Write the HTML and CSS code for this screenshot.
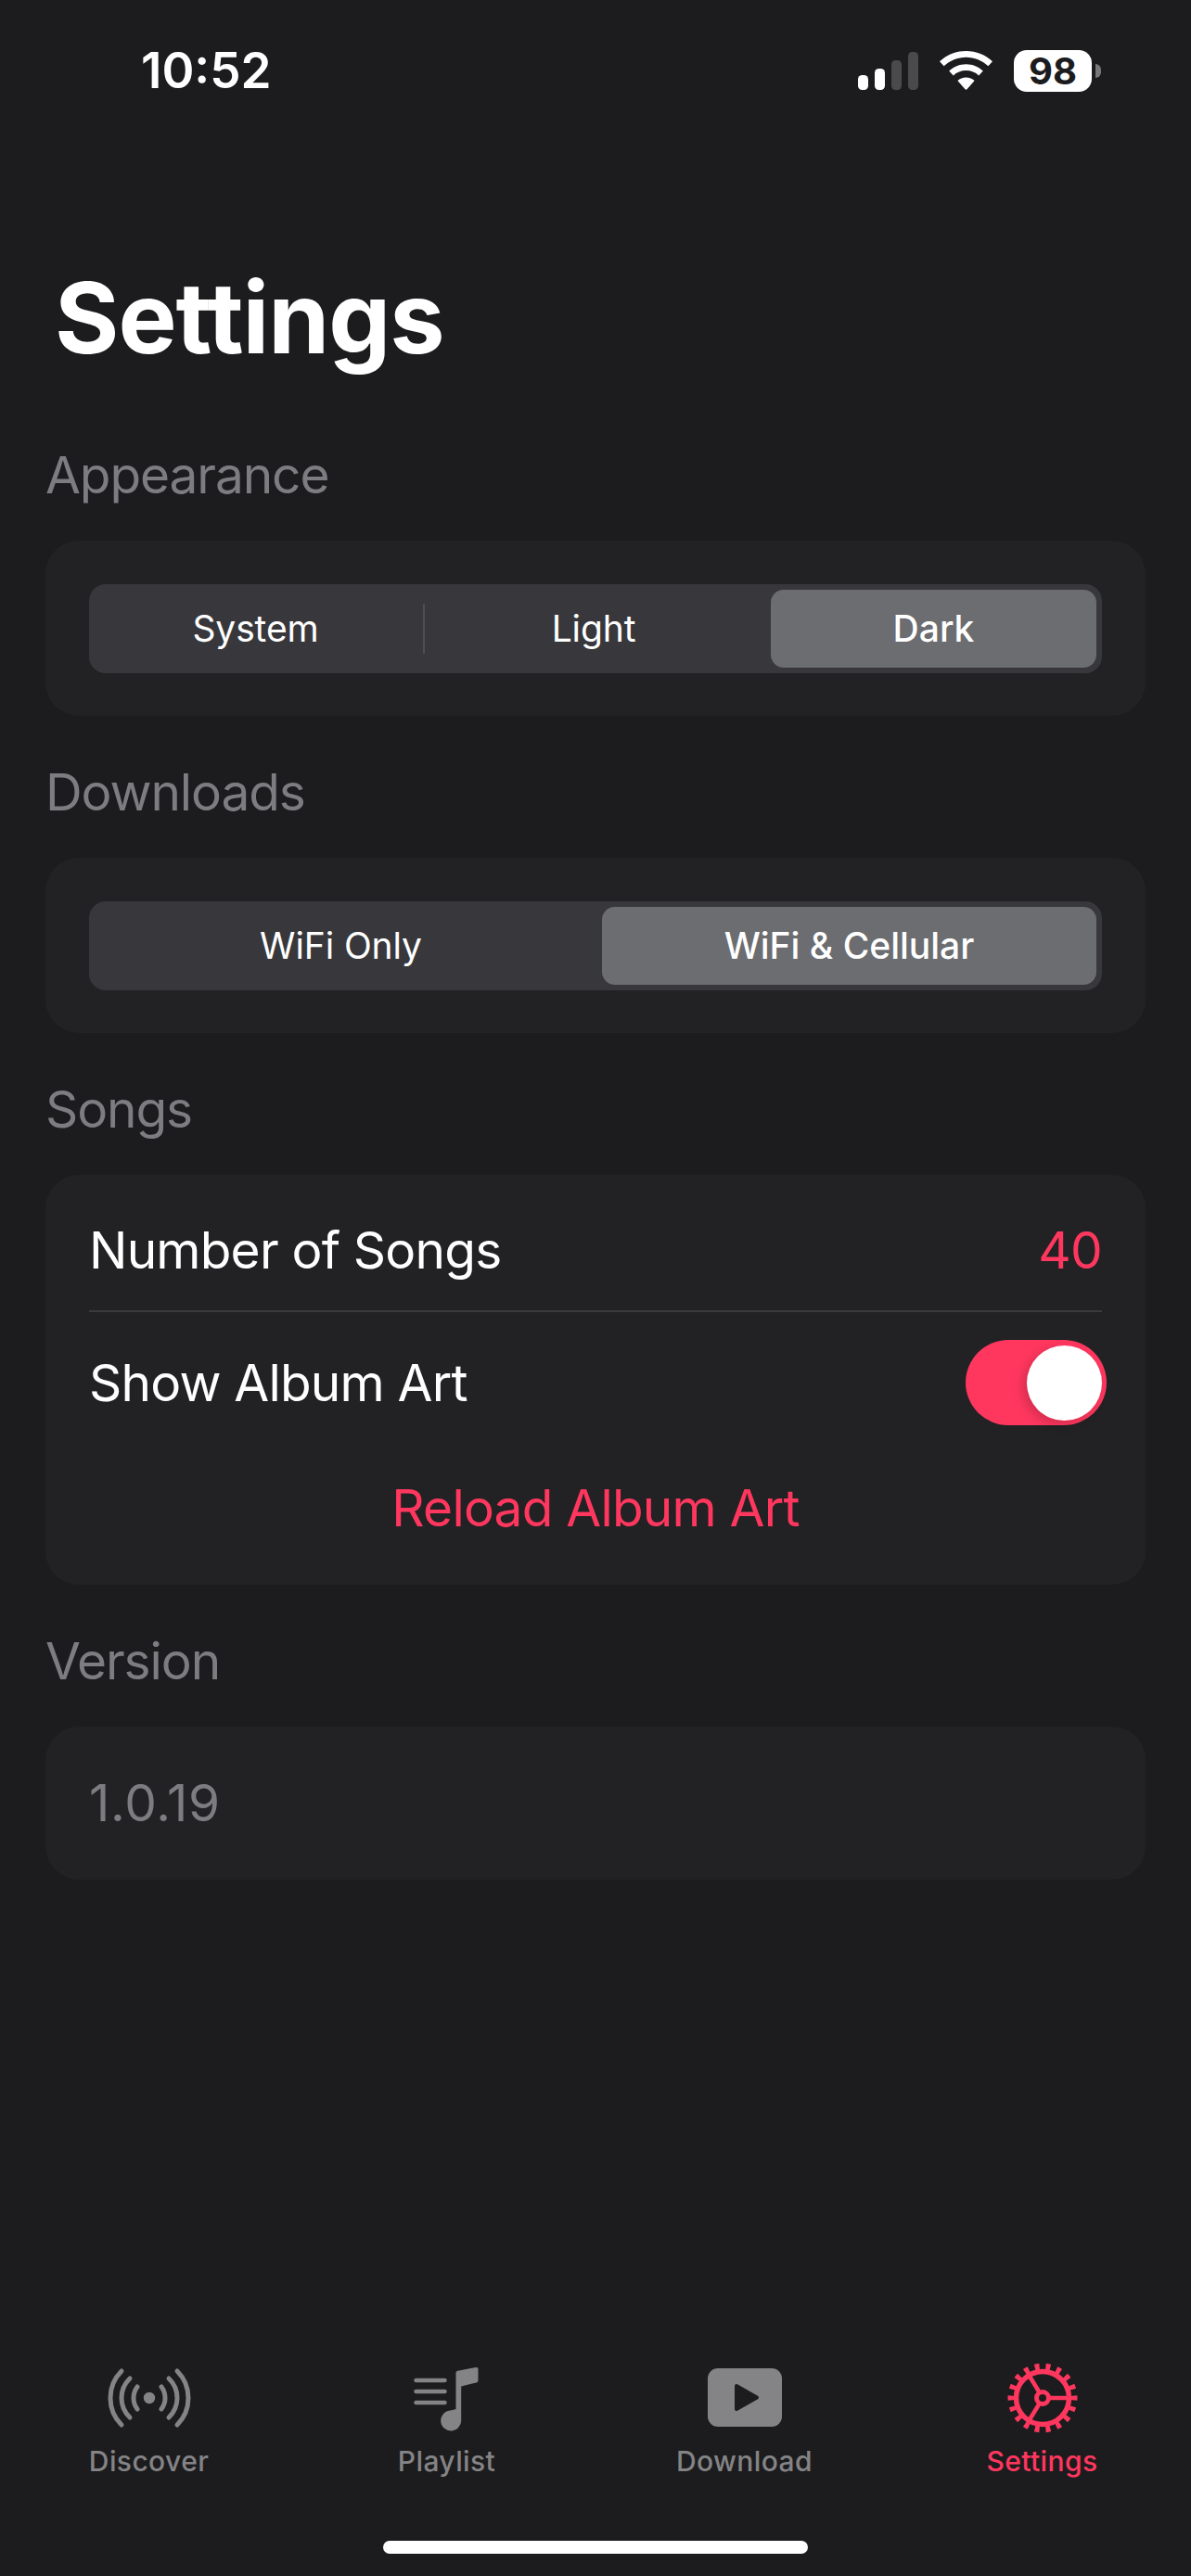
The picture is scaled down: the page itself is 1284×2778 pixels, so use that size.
FILE: index.html
```html
<!DOCTYPE html>
<html lang="en">
<head>
<meta charset="utf-8">
<title>Settings</title>
<link rel="stylesheet" href="styles.css">
</head>
<body>
<div class="screen">
  <header class="status">
    <span class="time">10:52</span>
    <div class="status-icons">
      <svg class="signal" width="65" height="41" viewBox="0 0 65 41" aria-hidden="true">
        <rect x="0" y="25" width="11" height="16" rx="4.5" fill="#fff"/>
        <rect x="18" y="18" width="11" height="23" rx="4.5" fill="#fff"/>
        <rect x="36" y="9" width="11" height="32" rx="4.5" fill="#4a4a4c"/>
        <rect x="54" y="0" width="11" height="41" rx="4.5" fill="#4a4a4c"/>
      </svg>
      <svg class="wifi" width="57" height="42" viewBox="0 0 57 42" aria-hidden="true">
        <path fill="#fff" d="M28.5 0C39.5 0 49.5 4.2 57 11.3L52.4 16.3C46 10.4 37.6 6.8 28.5 6.8S11 10.4 4.6 16.3L0 11.3C7.5 4.2 17.5 0 28.5 0Z"/>
        <path fill="#fff" d="M28.5 14.2C35.6 14.2 42 17 46.8 21.5L42.2 26.4C38.6 23 33.8 21 28.5 21S18.4 23 14.8 26.4L10.200 21.5C15 17 21.400 14.200 28.500 14.200Z"/>
        <path fill="#fff" d="M28.500 28.500C32 28.500 35.200 29.800 37.600 32L29.500 41.300C29 41.900 28 41.900 27.500 41.300L19.400 32C21.800 29.800 25 28.500 28.500 28.500Z"/>
      </svg>
      <div class="battery">
        <span class="battery-body">98</span>
        <span class="battery-cap"></span>
      </div>
    </div>
  </header>

  <main class="content">
    <h1 class="title">Settings</h1>

    <section class="section">
      <h2 class="label">Appearance</h2>
      <div class="card card-seg">
        <div class="seg seg-three">
          <span class="seg-item seg-pad">System</span>
          <span class="seg-item seg-pad seg-line">Light</span>
          <span class="seg-item seg-on">Dark</span>
        </div>
      </div>
    </section>

    <section class="section">
      <h2 class="label">Downloads</h2>
      <div class="card card-seg">
        <div class="seg seg-two">
          <span class="seg-item seg-pad-wide">WiFi Only</span>
          <span class="seg-item seg-on">WiFi &amp; Cellular</span>
        </div>
      </div>
    </section>

    <section class="section">
      <h2 class="label">Songs</h2>
      <div class="card card-songs">
        <div class="row row-number">
          <span>Number of Songs</span>
          <span class="accent">40</span>
        </div>
        <div class="row row-toggle">
          <span>Show Album Art</span>
          <div class="toggle"><span class="knob"></span></div>
        </div>
        <div class="reload accent">Reload Album Art</div>
      </div>
    </section>

    <section class="section">
      <h2 class="label">Version</h2>
      <div class="card card-version">1.0.19</div>
    </section>
  </main>

  <nav class="tabbar">
    <div class="tab">
      <svg class="tab-icon" width="96" height="76" viewBox="-48 -38 96 76" aria-hidden="true">
        <circle cx="0" cy="0" r="6.200" fill="#848486"/>
        <g fill="none" stroke="#848486" stroke-width="5" stroke-linecap="round">
          <path d="M-13 -12A20 20 0 0 0 -13 12"/>
          <path d="M13 -12A20 20 0 0 1 13 12"/>
          <path d="M-21 -21A29 29 0 0 0 -21 21"/>
          <path d="M21 -21A29 29 0 0 1 21 21"/>
          <path d="M-30 -29A41 41 0 0 0 -30 29"/>
          <path d="M30 -29A41 41 0 0 1 30 29"/>
        </g>
      </svg>
      <span class="tab-label">Discover</span>
    </div>
    <div class="tab">
      <svg class="tab-icon" width="72" height="76" viewBox="0 0 72 76" aria-hidden="true">
        <g stroke="#848486" stroke-width="4.500" stroke-linecap="round">
          <path d="M2.500 19H33.500"/>
          <path d="M2.500 31H33.500"/>
          <path d="M2.500 43H33.500"/>
        </g>
        <path fill="#848486" d="M45.500 11Q45.500 9.200 47.500 8.800L67 5Q69.500 4.500 69.500 7V19Q69.500 21 67.500 21.500L51.200 25.500V62A11 11 0 1 1 39 51.500Q42 51 45.500 50Z"/>
      </svg>
      <span class="tab-label">Playlist</span>
    </div>
    <div class="tab">
      <svg class="tab-icon" width="80" height="76" viewBox="0 0 80 76" aria-hidden="true">
        <rect x="0" y="6" width="80" height="63" rx="11" fill="#848486"/>
        <path d="M31 25L53 37.500L31 50Z" fill="#1c1c1e" stroke="#1c1c1e" stroke-width="4" stroke-linejoin="round"/>
      </svg>
      <span class="tab-label">Download</span>
    </div>
    <div class="tab tab-on">
      <svg class="tab-icon" width="76" height="76" viewBox="-38 -38 76 76" aria-hidden="true">
        <circle r="33.500" fill="none" stroke="#ff375f" stroke-width="8" pathLength="18" stroke-dasharray="0.420 0.580" stroke-dashoffset="0.210"/>
        <circle r="28.500" fill="none" stroke="#ff375f" stroke-width="5.500"/>
        <circle r="6.500" fill="none" stroke="#ff375f" stroke-width="5"/>
        <g stroke="#ff375f" stroke-width="4.500">
          <path d="M8 0H29"/>
          <path d="M-4 -7L-15 -25"/>
          <path d="M-4 7L-15 25"/>
        </g>
      </svg>
      <span class="tab-label">Settings</span>
    </div>
  </nav>

  <div class="home"><span class="home-bar"></span></div>
</div>
</body>
</html>
```

FILE: styles.css
```css
* { box-sizing: border-box; }

html, body {
  margin: 0;
  padding: 0;
  background: #1c1c1e;
}

.screen {
  width: 1284px;
  height: 2778px;
  display: flex;
  flex-direction: column;
  overflow: hidden;
  background: #1c1c1e;
  color: #fff;
  font-family: Inter, "Liberation Sans", sans-serif;
}

/* Status bar */
.status {
  height: 150px;
  padding: 46px 97px 0 152px;
  display: flex;
  justify-content: space-between;
  align-items: flex-start;
}

.time {
  font-size: 53px;
  font-weight: 600;
  line-height: 60px;
}

.status-icons {
  height: 60px;
  display: flex;
  align-items: center;
  gap: 23px;
}

.battery {
  display: flex;
  align-items: center;
  gap: 4px;
}

.battery-body {
  width: 84px;
  height: 45px;
  border-radius: 14px;
  background: #fff;
  color: #1c1c1e;
  font-size: 40px;
  font-weight: 700;
  line-height: 45px;
  text-align: center;
}

.battery-cap {
  width: 6px;
  height: 15px;
  border-radius: 0 8px 8px 0;
  background: #77777a;
}

/* Content */
.content {
  flex: 1;
  padding: 133px 49px 0;
}

.title {
  margin: 0 0 77px 10px;
  font-size: 106px;
  font-weight: 700;
  line-height: 120px;
  letter-spacing: -1px;
}

.section { margin-top: 50px; }

.label {
  margin: 0 0 38px;
  font-size: 55px;
  font-weight: 400;
  line-height: 65px;
  letter-spacing: -1.1px;
  color: #7d7d81;
}

.card {
  background: #222224;
  border-radius: 36px;
  padding-left: 47px;
  padding-right: 47px;
}

.card-seg { padding-top: 47px; padding-bottom: 46px; }

/* Segmented control */
.seg {
  height: 96px;
  padding: 6px;
  display: grid;
  background: #38383c;
  border-radius: 18px;
}

.seg-three { grid-template-columns: 355px 374px 351px; }
.seg-two { grid-template-columns: 547px 533px; }

.seg-item {
  position: relative;
  padding-bottom: 1px;
  display: flex;
  align-items: center;
  justify-content: center;
  font-size: 39px;
  font-weight: 400;
  letter-spacing: -0.1px;
}

.seg-pad { padding-right: 8px; }
.seg-pad-wide { padding-right: 16px; }

.seg-line::before {
  content: "";
  position: absolute;
  left: -1px;
  top: 15px;
  bottom: 15px;
  width: 2px;
  background: #4e4e52;
}

.seg-on {
  background: #6c6d71;
  border-radius: 14px;
  font-weight: 500;
  letter-spacing: 0;
}

/* Songs card */
.card-songs {
  padding-top: 48px;
  padding-bottom: 50px;
  font-size: 55px;
  line-height: 66px;
  letter-spacing: -0.8px;
}

.row {
  display: flex;
  justify-content: space-between;
  align-items: center;
}

.row-number {
  padding-bottom: 32px;
  border-bottom: 2px solid #3a3a3c;
}

.row-toggle {
  padding-top: 30px;
  margin-right: -5px;
}

.toggle {
  width: 152px;
  height: 92px;
  padding: 6px 5px;
  display: flex;
  justify-content: flex-end;
  background: #ff375f;
  border-radius: 46px;
}

.knob {
  width: 81px;
  height: 81px;
  border-radius: 50%;
  background: #fff;
  box-shadow: -4px 4px 12px rgba(0, 0, 0, 0.18);
}

.reload {
  margin-top: 56px;
  text-align: center;
}

.accent { color: #ff375f; }

.card-version {
  padding-top: 50px;
  padding-bottom: 50px;
  font-size: 55px;
  line-height: 65px;
  letter-spacing: 0.7px;
  color: #7d7d81;
}

/* Tab bar */
.tabbar {
  display: grid;
  grid-template-columns: repeat(4, 1fr);
}

.tab {
  display: flex;
  flex-direction: column;
  align-items: center;
  color: #848486;
}

.tab-on { color: #ff375f; }

.tab-icon { display: block; }

.tab-label {
  margin-top: 10px;
  font-size: 30px;
  font-weight: 500;
  line-height: 40px;
  letter-spacing: 0.4px;
}

.home {
  height: 104px;
  padding-top: 66px;
  display: flex;
  justify-content: center;
}

.home-bar {
  width: 458px;
  height: 14px;
  border-radius: 7px;
  background: #fff;
}
```
